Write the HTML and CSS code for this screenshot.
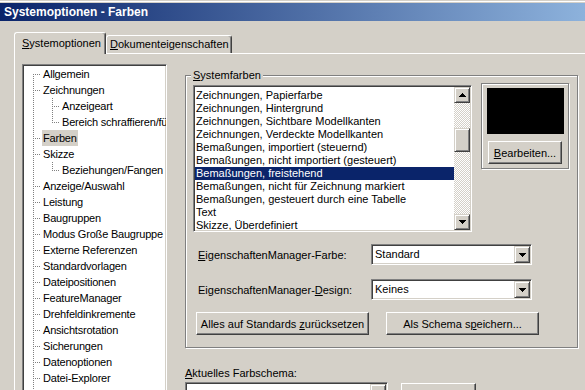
FILE: index.html
```html
<!DOCTYPE html>
<html lang="de">
<head>
    <meta charset="UTF-8">
    <title>Systemoptionen - Farben</title>
    <link rel="stylesheet" href="styles.css">
</head>
<body>
    <div class="window">
        <div class="titlebar">Systemoptionen - Farben</div>

        <!-- Tabs -->
        <div class="tabs">
            <div class="tab active"><u>S</u>ystemoptionen</div>
            <div class="tab inactive"><u>D</u>okumenteigenschaften</div>
        </div>

        <div class="panel">
            <!-- Options tree -->
            <div class="tree sunken">
                <div class="node first"><span>Allgemein</span></div>
                <div class="node"><span>Zeichnungen</span></div>
                <div class="node child"><span>Anzeigeart</span></div>
                <div class="node child last"><span>Bereich schraffieren/füllen</span></div>
                <div class="node"><span class="selected">Farben</span></div>
                <div class="node"><span>Skizze</span></div>
                <div class="node child last"><span>Beziehungen/Fangen</span></div>
                <div class="node"><span>Anzeige/Auswahl</span></div>
                <div class="node"><span>Leistung</span></div>
                <div class="node"><span>Baugruppen</span></div>
                <div class="node"><span>Modus Große Baugruppe</span></div>
                <div class="node"><span>Externe Referenzen</span></div>
                <div class="node"><span>Standardvorlagen</span></div>
                <div class="node"><span>Dateipositionen</span></div>
                <div class="node"><span>FeatureManager</span></div>
                <div class="node"><span>Drehfeldinkremente</span></div>
                <div class="node"><span>Ansichtsrotation</span></div>
                <div class="node"><span>Sicherungen</span></div>
                <div class="node"><span>Datenoptionen</span></div>
                <div class="node"><span>Datei-Explorer</span></div>
                <div class="node"><span>Fensterverhalten</span></div>
            </div>

            <div class="main">
                <!-- Systemfarben group -->
                <div class="group">
                    <div class="legend"><u>S</u>ystemfarben</div>
                    <div class="group-top">
                        <div class="listbox sunken">
                            <div class="items">
                                <div class="item">Zeichnungen, Papierfarbe</div>
                                <div class="item">Zeichnungen, Hintergrund</div>
                                <div class="item">Zeichnungen, Sichtbare Modellkanten</div>
                                <div class="item">Zeichnungen, Verdeckte Modellkanten</div>
                                <div class="item">Bemaßungen, importiert (steuernd)</div>
                                <div class="item">Bemaßungen, nicht importiert (gesteuert)</div>
                                <div class="item sel">Bemaßungen, freistehend</div>
                                <div class="item">Bemaßungen, nicht für Zeichnung markiert</div>
                                <div class="item">Bemaßungen, gesteuert durch eine Tabelle</div>
                                <div class="item">Text</div>
                                <div class="item">Skizze, Überdefiniert</div>
                            </div>
                            <div class="scrollbar">
                                <div class="sb-btn raised">
                                    <svg width="7" height="4" viewBox="0 0 7 4"><path d="M3 0h1v1h1v1h1v1h1v1H0V3h1V2h1V1h1z"/></svg>
                                </div>
                                <div class="sb-track">
                                    <div class="sb-thumb raised"></div>
                                </div>
                                <div class="sb-btn raised">
                                    <svg width="7" height="4" viewBox="0 0 7 4"><path d="M0 0h7v1H6v1H5v1H4v1H3V3H2V2H1V1H0z"/></svg>
                                </div>
                            </div>
                        </div>
                        <div class="swatch-frame">
                            <div class="swatch"></div>
                            <div class="btn raised edit-btn"><span><u>B</u>earbeiten...</span></div>
                        </div>
                    </div>

                    <div class="field-row">
                        <label><u>E</u>igenschaftenManager-Farbe:</label>
                        <div class="combo sunken">
                            <div class="combo-text">Standard</div>
                            <div class="combo-btn raised">
                                <svg width="7" height="4" viewBox="0 0 7 4"><path d="M0 0h7v1H6v1H5v1H4v1H3V3H2V2H1V1H0z"/></svg>
                            </div>
                        </div>
                    </div>
                    <div class="field-row second">
                        <label>EigenschaftenManager-<u>D</u>esign:</label>
                        <div class="combo sunken">
                            <div class="combo-text">Keines</div>
                            <div class="combo-btn raised">
                                <svg width="7" height="4" viewBox="0 0 7 4"><path d="M0 0h7v1H6v1H5v1H4v1H3V3H2V2H1V1H0z"/></svg>
                            </div>
                        </div>
                    </div>

                    <div class="button-row">
                        <div class="btn raised reset-btn"><span>Alles auf Standards <u>z</u>urücksetzen</span></div>
                        <div class="btn raised save-btn"><span>Als Schema s<u>p</u>eichern...</span></div>
                    </div>
                </div>

                <!-- Current scheme -->
                <div class="scheme-label"><u>A</u>ktuelles Farbschema:</div>
                <div class="scheme-row">
                    <div class="combo sunken scheme-combo">
                        <div class="combo-text"></div>
                        <div class="combo-btn raised"></div>
                    </div>
                    <div class="btn raised delete-btn"><span>Löschen</span></div>
                </div>
            </div>
        </div>
    </div>
</body>
</html>
```

FILE: styles.css
```css
:root {
    --face: #d4d0c8;
    --shadow: #808080;
    --dark: #404040;
    --select: #0a246a;
    --dot-v: repeating-linear-gradient(to bottom, #808080 0 1px, transparent 1px 2px);
    --dot-h: repeating-linear-gradient(to right, #808080 0 1px, transparent 1px 2px);
}

* {
    margin: 0;
    padding: 0;
    box-sizing: border-box;
}

body {
    height: 390px;
    overflow: hidden;
    background: var(--face);
    font: 11px 'Liberation Sans', Arial, sans-serif;
    color: #000;
}

.window {
    margin-top: 1px;
    border-top: 1px solid #fff;
    padding-top: 1px;
}

.titlebar {
    height: 18px;
    line-height: 18px;
    padding-left: 4px;
    color: #fff;
    font-weight: bold;
    font-size: 12px;
    background: linear-gradient(to right, #0a246a, #8db2dc);
}

/* Shared 3D borders */
.sunken {
    background: #fff;
    border: 1px solid;
    border-color: var(--shadow) #fff #fff var(--shadow);
    box-shadow: inset 1px 1px var(--dark), inset -1px -1px var(--face);
    padding: 1px;
}

.raised {
    background: var(--face);
    border: 1px solid;
    border-color: #fff var(--dark) var(--dark) #fff;
    box-shadow: inset -1px -1px var(--shadow);
}

.btn {
    height: 23px;
    display: flex;
    align-items: center;
    justify-content: center;
    white-space: nowrap;
}

/* Tabs */
.tabs {
    display: flex;
    align-items: flex-end;
    height: 21px;
    margin-top: 11px;
    padding-left: 14px;
}

.tab {
    border: 1px solid #fff;
    border-bottom: none;
    border-right-color: var(--dark);
    border-radius: 3px 3px 0 0;
    box-shadow: inset -1px 0 var(--shadow);
    line-height: 14px;
    white-space: nowrap;
}

.tab.active {
    position: relative;
    z-index: 1;
    width: 92px;
    height: 22px;
    margin-bottom: -1px;
    padding: 3px 0 0 7px;
    background: var(--face);
}

.tab.inactive {
    width: 126px;
    height: 18px;
    padding: 1px 0 0 3px;
}

.panel {
    display: flex;
    align-items: flex-start;
    gap: 18px;
    margin-left: 14px;
    border-top: 1px solid #fff;
    border-left: 1px solid #fff;
    padding: 10px 0 0 7px;
}

/* Tree */
.tree {
    width: 145px;
    height: 340px;
    overflow: hidden;
    white-space: nowrap;
    letter-spacing: -0.2px;
}

.node {
    height: 16px;
    line-height: 16px;
    padding-left: 18px;
    background:
        var(--dot-h) 9px 8px / 8px 1px no-repeat,
        var(--dot-v) 9px 0 / 1px 16px no-repeat;
}

.node.first {
    background:
        var(--dot-h) 9px 8px / 8px 1px no-repeat,
        var(--dot-v) 9px 8px / 1px 8px no-repeat;
}

.node.child {
    padding-left: 37px;
    background:
        var(--dot-h) 28px 8px / 8px 1px no-repeat,
        var(--dot-v) 28px 0 / 1px 16px no-repeat,
        var(--dot-v) 9px 0 / 1px 16px no-repeat;
}

.node.child.last {
    background:
        var(--dot-h) 28px 8px / 8px 1px no-repeat,
        var(--dot-v) 28px 0 / 1px 9px no-repeat,
        var(--dot-v) 9px 0 / 1px 16px no-repeat;
}

.node span {
    display: inline-block;
    padding: 0 1px;
}

.node .selected {
    background: var(--face);
}

/* Right side */
.main {
    width: 393px;
}

.group {
    margin-top: 11px;
    border: 1px solid var(--shadow);
    box-shadow: inset 1px 1px #fff, 1px 1px #fff;
    padding: 0 7px 12px;
}

.legend {
    display: table;
    margin: -8px 0 0 -2px;
    padding: 0 2px;
    line-height: 14px;
    background: var(--face);
}

.group-top {
    display: flex;
    align-items: flex-start;
}

.listbox {
    display: flex;
    width: 279px;
    height: 147px;
    margin-top: 3px;
}

.items {
    flex: 1;
    overflow: hidden;
    white-space: nowrap;
    padding-top: 2px;
}

.item {
    height: 13px;
    line-height: 13px;
    padding-left: 1px;
}

.item.sel {
    background: var(--select);
    color: #fff;
}

.scrollbar {
    width: 16px;
    display: flex;
    flex-direction: column;
}

.sb-btn {
    height: 16px;
    display: flex;
    align-items: center;
    justify-content: center;
    border-color: var(--face) var(--dark) var(--dark) var(--face);
    box-shadow: inset 1px 1px #fff, inset -1px -1px var(--shadow);
}

.sb-track {
    flex: 1;
    background: repeating-conic-gradient(#fff 0 25%, var(--face) 0 50%) 0 0 / 2px 2px;
}

.sb-thumb {
    height: 24px;
    margin-top: 25px;
    border-color: var(--face) var(--dark) var(--dark) var(--face);
    box-shadow: inset 1px 1px #fff, inset -1px -1px var(--shadow);
}

.swatch-frame {
    width: 88px;
    margin: 1px 0 0 9px;
    padding: 4px;
    border: 1px solid var(--shadow);
    box-shadow: inset 1px 1px #fff, 1px 1px #fff;
    display: flex;
    flex-direction: column;
    align-items: center;
    gap: 7px;
}

.swatch {
    width: 77px;
    height: 46px;
    background: #000;
}

.edit-btn {
    width: 74px;
}

.field-row {
    display: flex;
    align-items: center;
    margin-top: 12px;
    padding-left: 5px;
}

.field-row.second {
    margin-top: 14px;
}

.field-row label {
    width: 173px;
}

.combo {
    display: flex;
    width: 161px;
    height: 21px;
}

.combo-text {
    flex: 1;
    padding-left: 2px;
    line-height: 17px;
}

.combo-btn {
    width: 16px;
    display: flex;
    align-items: center;
    justify-content: center;
    border-color: var(--face) var(--dark) var(--dark) var(--face);
    box-shadow: inset 1px 1px #fff, inset -1px -1px var(--shadow);
}

.button-row {
    display: flex;
    gap: 17px;
    margin-top: 12px;
    padding-left: 3px;
}

.reset-btn {
    width: 173px;
}

.save-btn {
    width: 153px;
}

.scheme-label {
    margin-top: 18px;
    line-height: 14px;
}

.scheme-row {
    display: flex;
    align-items: flex-start;
    margin-top: 2px;
}

.scheme-combo {
    width: 203px;
}

.delete-btn {
    width: 75px;
    margin: 1px 0 0 13px;
}
```
